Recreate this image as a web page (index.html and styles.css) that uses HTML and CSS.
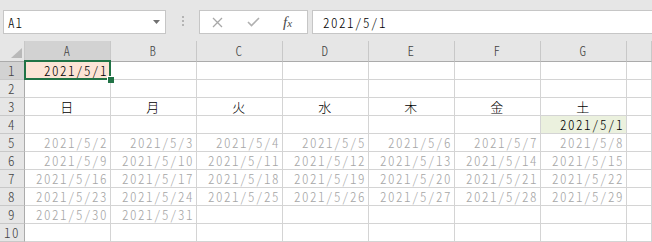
FILE: index.html
```html
<!DOCTYPE html>
<html lang="ja">
<head>
<meta charset="utf-8">
<link rel="stylesheet" href="styles.css">
</head>
<body>
<div class="toolbar">
  <div class="namebox"><span class="nb-text">A1</span>
    <svg class="caret" width="7" height="4" viewBox="0 0 7 4"><path d="M0 0H7L3.5 4Z" fill="#707070"/></svg>
  </div>
  <div class="dots"><i></i><i></i><i></i></div>
  <div class="btns">
    <svg class="ico-x" width="11" height="11" viewBox="0 0 11 11"><path d="M1 1L10 10M10 1L1 10" stroke="#a8a8a8" stroke-width="1.3" fill="none"/></svg>
    <svg class="ico-ok" width="13" height="10" viewBox="0 0 13 10"><path d="M1 5L4.5 8.5L12 1" stroke="#b0b0b0" stroke-width="1.6" fill="none"/></svg>
    <span class="fx"><i>f</i><span class="fx-x">x</span></span>
  </div>
  <div class="formula">2021/5/1</div>
</div>
<div class="sheet">
  <div class="h corner"><svg width="11" height="10" viewBox="0 0 11 10"><path d="M11 0V10H0Z" fill="#b9b9b9"/></svg></div>
  <div class="h sel">A</div><div class="h">B</div><div class="h">C</div><div class="h">D</div><div class="h">E</div><div class="h">F</div><div class="h">G</div><div class="h"></div>

  <div class="r sel">1</div>
  <div class="c a1">2021/5/1<span class="selbox"><span class="handle"></span></span></div>
  <div class="c"></div><div class="c"></div><div class="c"></div><div class="c"></div><div class="c"></div><div class="c"></div><div class="c"></div>

  <div class="r">2</div>
  <div class="c"></div><div class="c"></div><div class="c"></div><div class="c"></div><div class="c"></div><div class="c"></div><div class="c"></div><div class="c"></div>

  <div class="r">3</div>
  <div class="c day">日</div><div class="c day">月</div><div class="c day">火</div><div class="c day">水</div><div class="c day">木</div><div class="c day">金</div><div class="c day">土</div><div class="c"></div>

  <div class="r">4</div>
  <div class="c"></div><div class="c"></div><div class="c"></div><div class="c"></div><div class="c"></div><div class="c"></div><div class="c g4">2021/5/1</div><div class="c"></div>

  <div class="r">5</div>
  <div class="c dim">2021/5/2</div><div class="c dim">2021/5/3</div><div class="c dim">2021/5/4</div><div class="c dim">2021/5/5</div><div class="c dim">2021/5/6</div><div class="c dim">2021/5/7</div><div class="c dim">2021/5/8</div><div class="c"></div>

  <div class="r">6</div>
  <div class="c dim">2021/5/9</div><div class="c dim">2021/5/10</div><div class="c dim">2021/5/11</div><div class="c dim">2021/5/12</div><div class="c dim">2021/5/13</div><div class="c dim">2021/5/14</div><div class="c dim">2021/5/15</div><div class="c"></div>

  <div class="r">7</div>
  <div class="c dim">2021/5/16</div><div class="c dim">2021/5/17</div><div class="c dim">2021/5/18</div><div class="c dim">2021/5/19</div><div class="c dim">2021/5/20</div><div class="c dim">2021/5/21</div><div class="c dim">2021/5/22</div><div class="c"></div>

  <div class="r">8</div>
  <div class="c dim">2021/5/23</div><div class="c dim">2021/5/24</div><div class="c dim">2021/5/25</div><div class="c dim">2021/5/26</div><div class="c dim">2021/5/27</div><div class="c dim">2021/5/28</div><div class="c dim">2021/5/29</div><div class="c"></div>

  <div class="r">9</div>
  <div class="c dim">2021/5/30</div><div class="c dim">2021/5/31</div><div class="c"></div><div class="c"></div><div class="c"></div><div class="c"></div><div class="c"></div><div class="c"></div>

  <div class="r">10</div>
  <div class="c"></div><div class="c"></div><div class="c"></div><div class="c"></div><div class="c"></div><div class="c"></div><div class="c"></div><div class="c"></div>
</div>
</body>
</html>
```

FILE: styles.css
```css
html, body {
  margin: 0;
  padding: 0;
}
body {
  width: 652px;
  height: 242px;
  overflow: hidden;
  background: #e6e6e6;
  font-family: "Noto Sans CJK JP", sans-serif;
  font-feature-settings: "hwid";
  font-weight: 300;
  color: #000;
}

/* ---------- formula bar ---------- */
.toolbar {
  display: flex;
  align-items: flex-start;
  height: 41px;
  box-sizing: border-box;
  padding: 10px 0 0 3px;
  width: 652px;
}
.namebox {
  flex: none;
  width: 163px;
  height: 24px;
  box-sizing: border-box;
  border: 1px solid #c6c6c6;
  background: #fff;
  display: flex;
  align-items: center;
  justify-content: space-between;
  padding: 0 5px 0 4px;
  font-size: 13px;
  letter-spacing: 1px;
}
.dots {
  flex: none;
  margin: 6px 0 0 16px;
  display: flex;
  flex-direction: column;
  gap: 2px;
}
.dots i {
  display: block;
  width: 2px;
  height: 2px;
  background: #b4b4b4;
}
.btns {
  flex: none;
  margin-left: 15px;
  width: 109px;
  height: 24px;
  box-sizing: border-box;
  border: 1px solid #c6c6c6;
  background: #fff;
  display: flex;
  align-items: center;
  padding-left: 12px;
}
.ico-x { margin-right: 24px; }
.ico-ok { margin-right: 23px; }
.fx {
  font-family: "Liberation Serif", serif;
  font-size: 15px;
  font-weight: 400;
  color: #4a4a4a;
  font-feature-settings: normal;
}
.fx i { font-style: italic; }
.fx-x { font-style: italic; font-size: 11px; }
.formula {
  flex: 1;
  margin-left: 4px;
  height: 24px;
  box-sizing: border-box;
  border: 1px solid #c6c6c6;
  border-right: 0;
  background: #fff;
  display: flex;
  align-items: center;
  padding-left: 10px;
  font-size: 13px;
  letter-spacing: 1.5px;
}

/* ---------- sheet ---------- */
.sheet {
  display: grid;
  grid-template-columns: 25px repeat(7, 86px) 25px;
  grid-template-rows: 21px repeat(10, 18px);
  width: 652px;
}
.sheet > div {
  box-sizing: border-box;
  display: flex;
  font-size: 13px;
  line-height: 14px;
  letter-spacing: 1.5px;
  white-space: nowrap;
}
.c {
  background: #fff;
  border-right: 1px solid #d4d4d4;
  border-bottom: 1px solid #d4d4d4;
  align-items: flex-end;
  justify-content: flex-end;
  padding: 0 2px 1px 0;
}
.h {
  background: #e6e6e6;
  border-right: 1px solid #c8c8c8;
  border-bottom: 1px solid #ababab;
  align-items: center;
  justify-content: center;
  color: #444;
}
.r {
  background: #e6e6e6;
  border-right: 1px solid #ababab;
  border-bottom: 1px solid #c8c8c8;
  align-items: center;
  justify-content: center;
  color: #444;
  padding-top: 1px;
}
.corner {
  align-items: flex-end;
  justify-content: flex-end;
  padding: 0 2px 3px 0;
}
.sel { background: #d2d2d2; }

.day {
  justify-content: center;
  padding: 0 0 1px 0;
  letter-spacing: 0;
}
.dim { color: #a6a6a6; }
.a1 {
  position: relative;
  background: #fce4d6;
}
.g4 { background: #ebf1de; }

.selbox {
  position: absolute;
  left: -1px;
  top: -2px;
  right: -1px;
  bottom: -1px;
  border: 2px solid #217346;
  pointer-events: none;
}
.handle {
  position: absolute;
  right: -5px;
  bottom: -5px;
  width: 6px;
  height: 6px;
  background: #217346;
  border: 1px solid #fff;
  border-right: 0;
  border-bottom: 0;
}
```
